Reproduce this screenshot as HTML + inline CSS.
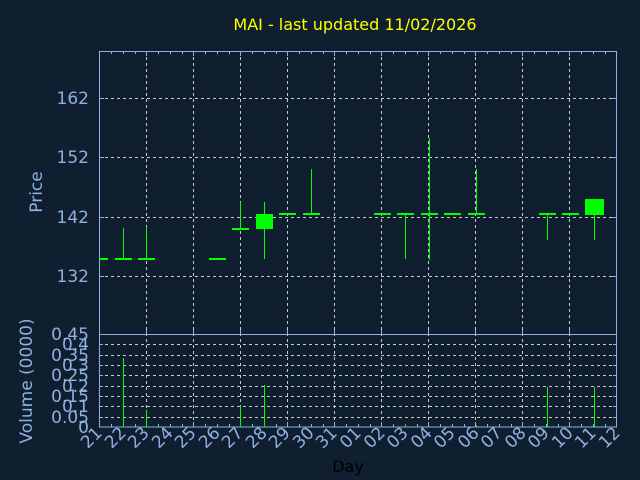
<!DOCTYPE html>
<html><head><meta charset="utf-8"><style>
html,body{margin:0;padding:0;background:#0f1f30;}
svg{display:block;font-family:"DejaVu Sans","Liberation Sans",sans-serif;}
</style></head><body>
<svg width="640" height="480" viewBox="0 0 640 480" xmlns="http://www.w3.org/2000/svg" shape-rendering="crispEdges">
<rect width="640" height="480" fill="#0f1f30"/>
<text x="355" y="30" fill="#ffff00" font-size="16" text-anchor="middle">MAI - last updated 11/02/2026</text>
<g stroke="#c8c8c8" stroke-width="1" stroke-dasharray="3,3" fill="none">
<path d="M146.5 51V427M193.5 51V427M240.5 51V427M287.5 51V427M334.5 51V427M381.5 51V427M428.5 51V427M475.5 51V427M522.5 51V427M569.5 51V427"/>
<path d="M99 98.5H617M99 157.5H617M99 217.5H617M99 276.5H617"/>
<path d="M99 344.5H617M99 355.5H617M99 365.5H617M99 375.5H617M99 386.5H617M99 396.5H617M99 406.5H617M99 417.5H617"/>
</g>
<g stroke="#8fb0e0" stroke-width="1" fill="none">
<rect x="99.5" y="51.5" width="517" height="375.5"/>
<path d="M99 334.5H617"/>
<path d="M111.5 51v3M123.5 51v3M135.5 51v3M146.5 51v5M158.5 51v3M170.5 51v3M182.5 51v3M193.5 51v5M205.5 51v3M217.5 51v3M229.5 51v3M240.5 51v5M252.5 51v3M264.5 51v3M276.5 51v3M287.5 51v5M299.5 51v3M311.5 51v3M323.5 51v3M334.5 51v5M346.5 51v3M358.5 51v3M370.5 51v3M381.5 51v5M393.5 51v3M405.5 51v3M417.5 51v3M428.5 51v5M440.5 51v3M452.5 51v3M464.5 51v3M475.5 51v5M487.5 51v3M499.5 51v3M511.5 51v3M522.5 51v5M534.5 51v3M546.5 51v3M558.5 51v3M569.5 51v5M581.5 51v3M593.5 51v3M605.5 51v3"/>
<path d="M111.5 427v-3M123.5 427v-3M135.5 427v-3M146.5 427v-5M158.5 427v-3M170.5 427v-3M182.5 427v-3M193.5 427v-5M205.5 427v-3M217.5 427v-3M229.5 427v-3M240.5 427v-5M252.5 427v-3M264.5 427v-3M276.5 427v-3M287.5 427v-5M299.5 427v-3M311.5 427v-3M323.5 427v-3M334.5 427v-5M346.5 427v-3M358.5 427v-3M370.5 427v-3M381.5 427v-5M393.5 427v-3M405.5 427v-3M417.5 427v-3M428.5 427v-5M440.5 427v-3M452.5 427v-3M464.5 427v-3M475.5 427v-5M487.5 427v-3M499.5 427v-3M511.5 427v-3M522.5 427v-5M534.5 427v-3M546.5 427v-3M558.5 427v-3M569.5 427v-5M581.5 427v-3M593.5 427v-3M605.5 427v-3"/>
<path d="M146.5 334v-4M193.5 334v-4M240.5 334v-4M287.5 334v-4M334.5 334v-4M381.5 334v-4M428.5 334v-4M475.5 334v-4M522.5 334v-4M569.5 334v-4"/>
<path d="M99 98.5h5M99 157.5h5M99 217.5h5M99 276.5h5M612 98.5h5M612 157.5h5M612 217.5h5M612 276.5h5"/>
<path d="M99 344.5h4M99 355.5h4M99 365.5h4M99 375.5h4M99 386.5h4M99 396.5h4M99 406.5h4M99 417.5h4M613 344.5h4M613 355.5h4M613 365.5h4M613 375.5h4M613 386.5h4M613 396.5h4M613 406.5h4M613 417.5h4"/>
</g>
<g fill="#00ff00">
<rect x="99" y="258" width="9" height="2"/>
<rect x="115" y="258" width="17" height="2"/>
<rect x="138" y="258" width="17" height="2"/>
<rect x="209" y="258" width="17" height="2"/>
<rect x="232" y="228" width="17" height="2"/>
<rect x="279" y="213" width="17" height="2"/>
<rect x="303" y="213" width="17" height="2"/>
<rect x="374" y="213" width="17" height="2"/>
<rect x="397" y="213" width="17" height="2"/>
<rect x="421" y="213" width="17" height="2"/>
<rect x="444" y="213" width="17" height="2"/>
<rect x="468" y="213" width="17" height="2"/>
<rect x="539" y="213" width="17" height="2"/>
<rect x="562" y="213" width="17" height="2"/>
<rect x="256" y="214" width="17" height="15"/>
<rect x="585" y="199" width="19" height="16"/>
<rect x="123" y="228" width="1" height="31"/>
<rect x="146" y="227" width="1" height="32"/>
<rect x="240" y="202" width="1" height="27"/>
<rect x="264" y="202" width="1" height="57"/>
<rect x="311" y="169" width="1" height="45"/>
<rect x="405" y="214" width="1" height="45"/>
<rect x="429" y="138" width="1" height="122"/>
<rect x="476" y="169" width="1" height="45"/>
<rect x="547" y="214" width="1" height="26"/>
<rect x="594" y="214" width="1" height="26"/>
<rect x="123" y="358" width="1" height="69"/>
<rect x="146" y="410" width="1" height="17"/>
<rect x="240" y="406" width="1" height="21"/>
<rect x="264" y="385" width="1" height="42"/>
<rect x="405" y="424" width="1" height="3"/>
<rect x="476" y="425" width="1" height="2"/>
<rect x="547" y="387" width="1" height="40"/>
<rect x="594" y="387" width="1" height="40"/>
</g>
<g fill="#8fb0e0" font-size="17" text-anchor="end">
<text x="89" y="104">162</text>
<text x="89" y="163">152</text>
<text x="89" y="223">142</text>
<text x="89" y="282">132</text>
<text x="89" y="340">0.45</text>
<text x="89" y="350">0.4</text>
<text x="89" y="361">0.35</text>
<text x="89" y="371">0.3</text>
<text x="89" y="381">0.25</text>
<text x="89" y="392">0.2</text>
<text x="89" y="402">0.15</text>
<text x="89" y="412">0.1</text>
<text x="89" y="423">0.05</text>
<text x="89" y="433">0</text>
</g>
<text transform="translate(42,192) rotate(-90)" fill="#8fb0e0" font-size="17" text-anchor="middle">Price</text>
<text transform="translate(32,381) rotate(-90)" fill="#8fb0e0" font-size="17" text-anchor="middle">Volume (0000)</text>
<g fill="#8fb0e0" font-size="17" text-anchor="end">
<text transform="translate(103,434) rotate(-45)">21</text>
<text transform="translate(127,434) rotate(-45)">22</text>
<text transform="translate(150,434) rotate(-45)">23</text>
<text transform="translate(174,434) rotate(-45)">24</text>
<text transform="translate(197,434) rotate(-45)">25</text>
<text transform="translate(221,434) rotate(-45)">26</text>
<text transform="translate(244,434) rotate(-45)">27</text>
<text transform="translate(268,434) rotate(-45)">28</text>
<text transform="translate(291,434) rotate(-45)">29</text>
<text transform="translate(315,434) rotate(-45)">30</text>
<text transform="translate(338,434) rotate(-45)">31</text>
<text transform="translate(362,434) rotate(-45)">01</text>
<text transform="translate(386,434) rotate(-45)">02</text>
<text transform="translate(409,434) rotate(-45)">03</text>
<text transform="translate(433,434) rotate(-45)">04</text>
<text transform="translate(456,434) rotate(-45)">05</text>
<text transform="translate(480,434) rotate(-45)">06</text>
<text transform="translate(503,434) rotate(-45)">07</text>
<text transform="translate(527,434) rotate(-45)">08</text>
<text transform="translate(550,434) rotate(-45)">09</text>
<text transform="translate(574,434) rotate(-45)">10</text>
<text transform="translate(597,434) rotate(-45)">11</text>
<text transform="translate(621,434) rotate(-45)">12</text>
</g>
<text x="348" y="472" fill="#000000" font-size="16" text-anchor="middle">Day</text>
</svg>
</body></html>
